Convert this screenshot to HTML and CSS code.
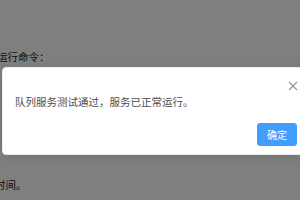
FILE: index.html
```html
<!DOCTYPE html>
<html>
<head>
    <title>队列服务测试</title>
    <link rel="stylesheet" href="styles.css">
</head>
<body>
    <div class="page">
        <p class="line cmd">运行命令：</p>
        <p class="line tail">时间。</p>
    </div>

    <div class="overlay"></div>

    <div class="msgbox">
        <button class="msgbox-close" aria-label="关闭">
            <svg width="10" height="10" viewBox="0 0 10 10">
                <path d="M1 1L9 9M9 1L1 9" stroke="#909399" stroke-width="1.1" fill="none"/>
            </svg>
        </button>
        <div class="msgbox-content">队列服务测试通过，服务已正常运行。</div>
        <div class="msgbox-btns">
            <button class="btn-primary">确定</button>
        </div>
    </div>
</body>
</html>
```

FILE: styles.css
```css
body {
    margin: 0;
    padding: 0;
    background: #fff;
    color: #222;
    font-family: 'Noto Sans CJK SC', 'Liberation Sans', sans-serif;
    width: 300px;
    height: 200px;
    overflow: hidden;
}
.page {
    padding-top: 48px;
}
.line {
    margin: 0;
    font-size: 10.5px;
    line-height: 18px;
}
.cmd {
    margin-left: -3px;
}
.tail {
    margin-top: 110px;
    margin-left: -5px;
}
.overlay {
    position: absolute;
    left: 0;
    top: 0;
    width: 300px;
    height: 200px;
    background: rgba(0, 0, 0, 0.5);
}
.msgbox {
    position: absolute;
    left: 2px;
    top: 67px;
    width: 310px;
    box-sizing: border-box;
    padding: 24px 14px 8px 12px;
    background: #fff;
    border: 1px solid #ebeef5;
    border-radius: 4px;
    box-shadow: 0 2px 12px rgba(0, 0, 0, 0.1);
}
.msgbox-close {
    position: absolute;
    top: 13px;
    right: 13px;
    padding: 0;
    border: none;
    background: transparent;
    width: 10px;
    height: 10px;
    display: flex;
}
.msgbox-content {
    font-size: 10.5px;
    line-height: 20px;
    color: #4a4c50;
}
.msgbox-btns {
    display: flex;
    justify-content: flex-end;
    margin-top: 11px;
}
.btn-primary {
    width: 40px;
    height: 23px;
    padding: 0;
    background: #409eff;
    border: 1px solid #409eff;
    border-radius: 3px;
    color: #fff;
    font-family: inherit;
    font-size: 10px;
}
```
